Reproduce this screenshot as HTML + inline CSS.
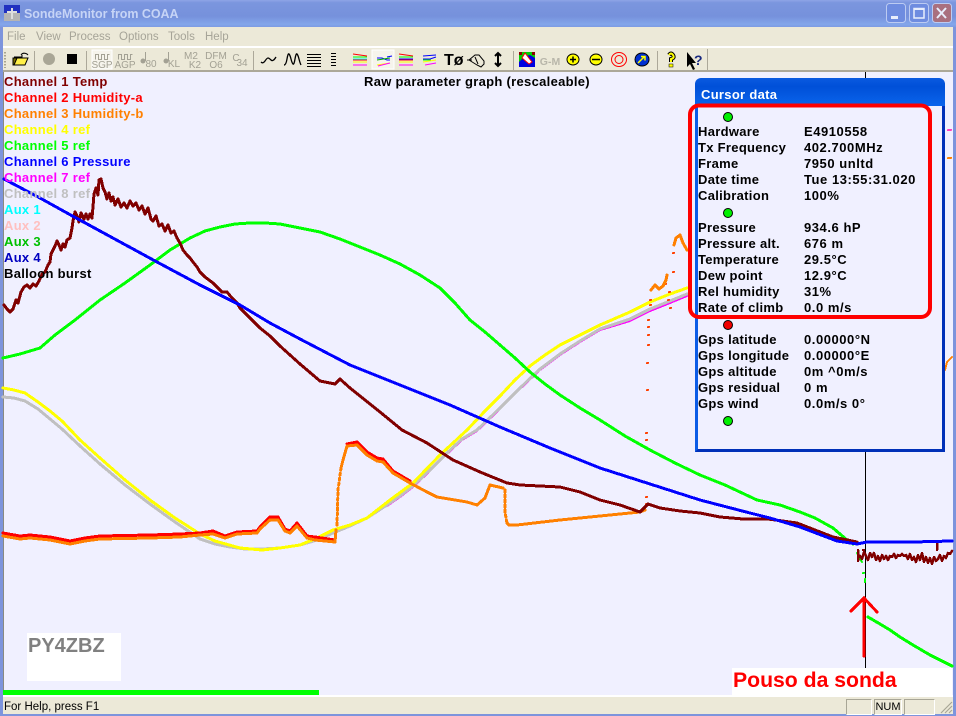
<!DOCTYPE html>
<html><head><meta charset="utf-8"><style>
html,body{margin:0;padding:0;width:956px;height:716px;overflow:hidden;background:#F0F0FF;font-family:"Liberation Sans",sans-serif}
div{position:absolute;white-space:nowrap}
.l{font-weight:bold;font-size:13px;letter-spacing:.3px;line-height:16px;height:16px;margin-top:1px}
.c{color:#000;left:698px}.v{color:#000;left:804px;letter-spacing:.55px}
.m{top:30px;font-size:11.5px;color:#A6A498;line-height:14px}
</style></head><body>
<div style="left:0;top:0;width:956px;height:27px;background:linear-gradient(#8EA5E6 0,#7B96DE 10%,#7691DC 60%,#83A6EA 90%,#7D9BE2 100%)"></div>
<div style="left:24px;top:5px;font-size:12.5px;font-weight:bold;letter-spacing:-.05px;color:#C6D4F6;line-height:18px">SondeMonitor from COAA</div>
<div style="left:0;top:27px;width:956px;height:19px;background:#ECE9D8"></div>
<div style="left:0;top:46px;width:956px;height:2px;background:#fff"></div>
<div style="left:0;top:48px;width:956px;height:22px;background:#ECE9D8"></div>
<div style="left:0;top:70px;width:956px;height:2px;background:#ACA899"></div>
<div class="m" style="left:7px">File</div><div class="m" style="left:36px">View</div><div class="m" style="left:69px">Process</div><div class="m" style="left:119px">Options</div><div class="m" style="left:168px">Tools</div><div class="m" style="left:205px">Help</div>

<svg style="position:absolute;left:0;top:0" width="956" height="716" viewBox="0 0 956 716" font-family="Liberation Sans">
<rect x="0" y="27" width="3" height="689" fill="#7D94DC"/><rect x="953" y="27" width="3" height="689" fill="#7D94DC"/><rect x="0" y="714" width="956" height="2" fill="#7D94DC"/>
<rect x="3" y="72" width="1" height="625" fill="#8a8a80"/>
<g stroke="#BCCBF2" stroke-width="1">
<rect x="886.500" y="3.500" width="19" height="19" rx="3" fill="#6E8CE0"/><rect x="909.500" y="3.500" width="19" height="19" rx="3" fill="#6E8CE0"/><rect x="932.500" y="3.500" width="19" height="19" rx="3" fill="#A9707F"/></g>
<rect x="891" y="16" width="7" height="3" fill="#E8EEFC"/><rect x="914" y="8.500" width="10" height="9.500" fill="none" stroke="#E8EEFC" stroke-width="1.500"/><rect x="914" y="8" width="10" height="2" fill="#E8EEFC"/>
<path d="M937 8l9 10M946 8l-9 10" stroke="#E8EEFC" stroke-width="2"/>
<rect x="4" y="5" width="16" height="16" fill="#B4B4B4"/><rect x="4" y="5" width="16" height="8" fill="#2030C0"/><path d="M7 12h10M12 8v11" stroke="#ddd" stroke-width="2"/>
<path d="M5 52v16" stroke="#a8a590" stroke-width="2" stroke-dasharray="1.500 1.500"/>
<g stroke="#ACA899"><path d="M34.500 51v19M86.500 51v19M253.500 51v19M513.500 51v19M657.500 51v19M707.500 49v21"/></g>
<path d="M14 57h8v-2" fill="none" stroke="#000"/>
<path d="M13 58h14l-3 1-2 6H13z" fill="#7a7000" stroke="#000"/><path d="M14 65l3-7h11l-3 7z" fill="#FFF048" stroke="#000"/><path d="M21 55q2-3 6-1l1 1" fill="none" stroke="#000"/>
<circle cx="49" cy="59" r="6" fill="#A9A696"/>
<rect x="67" y="54" width="10" height="10" fill="#000"/>
<rect x="92" y="50" width="20" height="19" fill="#F6F4EC" stroke="#fff"/>
<g fill="none" stroke="#A3A194" stroke-width="1">
<path d="M95.500 59.500v-5h3v5h3v-5h3v5h3v-5h2M118.500 59.500v-5h3v5h3v-5h3v5h3v-5h2"/>
<path d="M261 62q2 2 4-1t3-3 3 2 5-3" stroke="#000" stroke-width="1.300"/>
<path d="M284 65q2 0 3-6t2-5 2 5 2 5 2-5 2-5 2 5 2 6" stroke="#000" stroke-width="1.300"/>
<path d="M307 54.500h14M307 57.500h14M307 60.500h14M307 63.500h14M307 66.500h14" stroke="#000"/>
<path d="M331 53.500h5M331 56.500h5M331 59.500h5M331 62.500h5M331 65.500h5" stroke="#000"/>
</g>
<g font-size="10" fill="#A3A194" text-anchor="middle">
<text x="102" y="68">SGP</text><text x="125" y="68">AGP</text><text x="151" y="67">80</text><text x="174" y="67">KL</text><text x="191" y="59">M2</text><text x="195" y="68">K2</text><text x="216" y="59">DFM</text><text x="216" y="68">O6</text><text x="242" y="66">34</text><text x="236" y="61">C</text>
</g>
<g fill="#A3A194"><circle cx="143" cy="61" r="2.500"/><rect x="145" y="52" width="1" height="9"/><circle cx="166" cy="61" r="2.500"/><rect x="168" y="52" width="1" height="9"/></g>
<rect x="372" y="50" width="22" height="19" fill="#F6F4EC" stroke="#fff"/>
<g fill="none" stroke-width="1">
<path d="M353 54l14 2M353 60h14" stroke="#F00"/><path d="M353 57h14" stroke="#0f0"/><path d="M353 59h14" stroke="#0ff"/><path d="M353 62h14" stroke="#ff0"/><path d="M353 65h14" stroke="#f0f"/>
<path d="M377 58h5l5 2h3M387 57l5-1" stroke="#00f"/><path d="M377 60l13-2" stroke="#0a0"/><path d="M377 65l13-2" stroke="#ff0"/><path d="M378 66l12-3" stroke="#f0f"/>
<path d="M399 54l14 2M399 60h14" stroke="#F00"/><path d="M399 57h14" stroke="#0f0"/><path d="M399 59h14" stroke="#00f"/><path d="M399 62h14" stroke="#ff0"/><path d="M399 65h14" stroke="#f0f"/>
<path d="M423 56l13-1M423 59h7l6-2" stroke="#00f"/><path d="M423 60h8" stroke="#0f0"/><path d="M423 62l13-2" stroke="#ff0"/><path d="M425 65l11-2" stroke="#f0f"/>
<path d="M469 60l6-5 4 0 5 6 0 3-3 3-4-2-8-5zM472 60h-5M475 57l3 7" stroke="#000"/>
</g>
<text x="444" y="65" font-size="16" font-weight="bold" fill="#000">Tø</text>
<path d="M498 53v13M495 56l3-3 3 3M495 63l3 3 3-3" fill="none" stroke="#000" stroke-width="2"/>
<rect x="519" y="52" width="16" height="15" fill="#0000E0"/><path d="M519 52h16v6l-5-3-5 1-6 6z" fill="#00D000"/><path d="M525 53l7 9-3 2-7-6z" fill="#fff" stroke="#f00"/><rect x="519" y="52" width="3" height="3" fill="#800"/><rect x="532" y="52" width="3" height="3" fill="#800"/>
<text x="550" y="65" font-size="10.500" font-weight="bold" fill="#B8B6AA" text-anchor="middle">G-M</text>
<ellipse cx="573" cy="59.500" rx="6" ry="5.500" fill="#FF0" stroke="#000"/><path d="M570 59.500h6M573 56.500v6" stroke="#000" stroke-width="1.500"/>
<ellipse cx="596" cy="59.500" rx="6" ry="5.500" fill="#FF0" stroke="#000"/><path d="M592 59.500h8" stroke="#000" stroke-width="1.500"/>
<ellipse cx="619" cy="59.500" rx="7.500" ry="7" fill="none" stroke="#F00"/><ellipse cx="619" cy="59.500" rx="4" ry="4" fill="none" stroke="#F00"/>
<ellipse cx="642" cy="59.500" rx="7" ry="6.500" fill="#0030D0" stroke="#000"/><path d="M638 63l6-6M641 56.500h4v4" fill="none" stroke="#FF0" stroke-width="1.500"/>
<path d="M669 55q2-3 4 0t-2 4v3" fill="none" stroke="#000" stroke-width="4"/><path d="M669 55q2-3 4 0t-2 4v3" fill="none" stroke="#FF0" stroke-width="2"/><rect x="669" y="64" width="4" height="3" fill="#FF0" stroke="#000" stroke-width=".5"/>
<path d="M687 52v15l3-3 3 6 2-1-3-6h4z" fill="#000"/><text x="694" y="65" font-size="14" font-weight="bold" fill="#1A2A80">?</text>

<rect x="4" y="72" width="949" height="625" fill="#F0F0FF"/>
<rect x="27" y="633" width="94" height="48" fill="#fff"/>
<rect x="732" y="668" width="220" height="28" fill="#fff"/>
<path d="M865.500 72V668" stroke="#000" stroke-width="1"/>
<g fill="none" stroke-linejoin="round" stroke-linecap="round" shape-rendering="crispEdges">
<path stroke="#FF00FF" stroke-width="2" d="M387 506L400 497 413 487 430 471 447 454 462 440 477 431 500 409 520 389 540 370 560 355 580 342 600 330 630 321 650 311 670 303 687 296"/>
<path stroke="#C0C0C0" stroke-width="3" d="M3 397L14 398 25 401 38 409 50 419 62 429 80 446 100 464 125 485 150 504 175 522 200 539 215 544 230 547 245 549 262 549 280 548 300 545 317 540 333 533 350 526 367 518 387 505 400 496 413 486 430 470 447 453 462 439 477 430 500 408 520 388 540 369 560 354 580 341 600 329 630 319 650 309 670 301 687 294"/>
<path stroke="#FFFF00" stroke-width="3" d="M3 388L14 390 25 393 38 402 50 411 62 421 80 440 100 458 125 480 150 500 175 518 200 534 215 541 240 548 262 550 280 548 300 545 317 538 333 530 350 525 367 518 390 500 413 483 440 455 467 430 485 411 500 396 515 380 530 366 545 355 560 345 580 335 600 325 630 312 650 302 670 294 687 288"/>
<path stroke="#FF0000" stroke-width="3" d="M3 533L20 536 30 535 50 537 70 541 85 538 100 536 150 535 180 534 200 533 213 531 225 536 237 532 257 531 260 527 270 517 278 517 285 529 290 531 297 523 307 536 315 537 335 540M347 444L357 442 367 452 377 458 383 459 393 471 410 481"/>
<path stroke="#FF8000" stroke-width="3" d="M3 536L20 539 30 538 50 540 70 544 85 541 100 539 150 538 180 537 200 535 213 534 225 538 237 534 257 533 260 529 270 520 278 520 285 531 290 533 297 526 307 538 315 540 335 542 336 530M341 468L343 460 347 446 357 445 367 455 377 461 383 462 393 473 410 483 427 492 437 497 467 502 477 505 485 498 490 485 503 488M507 523L509 525 517 525 560 520 600 516 640 512 645 510"/>
<path stroke="#FF8000" stroke-width="3" stroke-dasharray="2 3" d="M337 525L338 490 341 468M505 490L505 512 507 523"/>
<path stroke="#FF4000" stroke-width="2" d="M646 504h1M646 497h1M646 440h1M646 433h1M647 390h1M647 363h1M648 345h1M648 335h1M648 327h1M648 320h1M650 305h1M650 300h1M668 300h1M670 308h1M669 292h1M673 272h1M673 253h1M665 284h1"/>
<path stroke="#FF8000" stroke-width="3" d="M651 290L655 285 659 289 663 286 666 280 667 275M674 245L676 238 680 235 683 243 687 250"/>
<path stroke="#FF8000" stroke-width="2" d="M945 370L947 362 952 357"/>
<path stroke="#FF40C0" stroke-width="2" d="M948 130h3"/><path stroke="#FF8000" stroke-width="2" d="M948 158h3"/>
<path stroke="#00FF00" stroke-width="3" d="M3 358L20 354 40 348 55 335 75 320 100 300 125 283 150 265 170 250 190 238 205 231 220 227 235 224 250 223 265 223 280 224 300 228 320 232 340 239 360 247 380 255 400 264 420 275 440 288 455 303 470 320 485 332 500 345 515 358 530 372 545 384 560 395 580 408 600 420 625 436 650 450 675 463 700 475 725 485 757 500 780 505 800 512 815 518 833 528 847 540 853 544"/>
<path stroke="#00FF00" stroke-width="2" d="M857 553L862 562M863 573h1M865 579V582"/>
<path stroke="#00FF00" stroke-width="3" d="M868 617L880 624 890 630 900 637 913 645 930 655 952 666"/>
<path stroke="#800000" stroke-width="3" d="M4 305L7 309 10 312 13 309 16 300 18 303 21 292 24 287 27 285 30 288 33 284 36 286 39 281 42 274 45 272 48 265 50 262 51 254 53 250 55 246 57 241 59 245 61 250 63 244 65 247 67 240 70 238 72 228 73 221 75 212 77 216 79 222 81 213 84 219 86 214 88 219 90 214 92 218 93 207 94 194 96 188 98 195 99 180 101 179 103 188 105 192 107 199 109 193 111 201 113 197 115 205 118 199 121 207 124 203 127 208 130 201 133 206 136 203 139 210 142 206 145 214 148 208 151 219 153 221 156 216 159 226 162 224 165 231 168 225 171 233 174 231 177 238 180 243 183 250 187 255 190 258 193 262 197 267 200 272 205 277 209 280 213 283 218 288 222 292 227 292 232 298 237 303 240 308 245 313 250 318 260 328 270 336 280 346 300 364 320 381 335 384 340 379 350 388 360 396 380 412 402 430 427 443 453 460 480 472 507 483 520 485 560 487 580 492 600 500 620 505 640 512 648 504 660 508 680 511 700 513 720 517 743 519 768 519 797 523 815 530 833 537 857 542"/>
<path stroke="#800000" stroke-width="2.500" d="M858 550V561M860 556L862 559 864 552 866 556 868 560 870 553 872 557 874 553 876 560 878 556 880 561 882 555 884 559 886 556 888 560 890 556 892 557 894 554 896 558 898 555 900 556 902 554 904 556 906 555 908 559 910 554 912 560 914 557 916 562 918 555 920 560 922 553 924 562 926 557 928 563 930 558 932 564 934 557 936 561 938 559 940 555 942 561 944 556 946 558 948 553 950 554 952 551M937 543V550M863 550h1"/>
<path stroke="#0000FF" stroke-width="3" d="M4 179L40 198 67 213 100 231 157 262 200 285 240 305 270 323 300 339 350 365 400 385 450 405 500 427 550 448 600 468 650 484 700 500 750 513 770 518 800 527 837 541 857 544 867 542 913 542 952 541"/>
<path stroke="#FF0000" stroke-width="3" stroke-linejoin="miter" d="M851 611L864 598 877 612"/>
<path stroke="#FF0000" stroke-width="3" d="M864 600V656"/>
</g>
<rect x="3" y="690" width="316" height="5" fill="#00FF00"/>
</svg>

<div class="l" style="left:4px;top:73px;color:#800000">Channel 1 Temp</div>
<div class="l" style="left:4px;top:89px;color:#FF0000">Channel 2 Humidity-a</div>
<div class="l" style="left:4px;top:105px;color:#FF8000">Channel 3 Humidity-b</div>
<div class="l" style="left:4px;top:121px;color:#FFFF00">Channel 4 ref</div>
<div class="l" style="left:4px;top:137px;color:#00FF00">Channel 5 ref</div>
<div class="l" style="left:4px;top:153px;color:#0000FF">Channel 6 Pressure</div>
<div class="l" style="left:4px;top:169px;color:#FF00FF">Channel 7 ref</div>
<div class="l" style="left:4px;top:185px;color:#C0C0C0">Channel 8 ref</div>
<div class="l" style="left:4px;top:201px;color:#00FFFF">Aux 1</div>
<div class="l" style="left:4px;top:217px;color:#FFC0C0">Aux 2</div>
<div class="l" style="left:4px;top:233px;color:#00C000">Aux 3</div>
<div class="l" style="left:4px;top:249px;color:#0000C0">Aux 4</div>
<div class="l" style="left:4px;top:265px;color:#000">Balloon burst</div>
<div class="l" style="left:364px;top:73px;color:#000">Raw parameter graph (rescaleable)</div>

<div style="left:28px;top:634px;font-size:20px;font-weight:bold;color:#808080;line-height:24px">PY4ZBZ</div>
<div style="left:733px;top:668px;font-size:21.200px;font-weight:bold;color:#FF0000;line-height:25px">Pouso da sonda</div>

<div style="left:695px;top:78px;width:250px;height:28px;border-radius:6px 6px 0 0;background:linear-gradient(#0A5AE0 0,#0050D8 30%,#0A64EC 100%)"></div>
<div style="left:701px;top:87px;font-size:13px;font-weight:bold;letter-spacing:.3px;color:#fff;line-height:16px">Cursor data</div>
<div style="left:695px;top:106px;width:244px;height:343px;background:#F0F0FF;border-left:3px solid #0C5CE6;border-right:3px solid #0030B8;border-bottom:3px solid #0030B8"></div>
<svg style="position:absolute;left:680px;top:95px" width="276" height="340" viewBox="680 95 276 340">
<g stroke="#000" stroke-width="1"><circle cx="728" cy="117" r="4.500" fill="#00F000"/><circle cx="728" cy="213" r="4.500" fill="#00F000"/><circle cx="728" cy="325" r="4.500" fill="#F00000"/><circle cx="728" cy="421" r="4.500" fill="#00F000"/></g>
<rect x="690" y="105.500" width="240" height="211.500" rx="9" fill="none" stroke="#FF0000" stroke-width="4"/>
</svg>
<div class="l c" style="top:123px">Hardware</div><div class="l v" style="top:123px">E4910558</div>
<div class="l c" style="top:139px">Tx Frequency</div><div class="l v" style="top:139px">402.700MHz</div>
<div class="l c" style="top:155px">Frame</div><div class="l v" style="top:155px">7950 unltd</div>
<div class="l c" style="top:171px">Date time</div><div class="l v" style="top:171px">Tue 13:55:31.020</div>
<div class="l c" style="top:187px">Calibration</div><div class="l v" style="top:187px">100%</div>
<div class="l c" style="top:219px">Pressure</div><div class="l v" style="top:219px">934.6 hP</div>
<div class="l c" style="top:235px">Pressure alt.</div><div class="l v" style="top:235px">676 m</div>
<div class="l c" style="top:251px">Temperature</div><div class="l v" style="top:251px">29.5°C</div>
<div class="l c" style="top:267px">Dew point</div><div class="l v" style="top:267px">12.9°C</div>
<div class="l c" style="top:283px">Rel humidity</div><div class="l v" style="top:283px">31%</div>
<div class="l c" style="top:299px">Rate of climb</div><div class="l v" style="top:299px">0.0 m/s</div>
<div class="l c" style="top:331px">Gps latitude</div><div class="l v" style="top:331px">0.00000°N</div>
<div class="l c" style="top:347px">Gps longitude</div><div class="l v" style="top:347px">0.00000°E</div>
<div class="l c" style="top:363px">Gps altitude</div><div class="l v" style="top:363px">0m ^0m/s</div>
<div class="l c" style="top:379px">Gps residual</div><div class="l v" style="top:379px">0 m</div>
<div class="l c" style="top:395px">Gps wind</div><div class="l v" style="top:395px">0.0m/s 0°</div>

<div style="left:3px;top:695px;width:950px;height:2px;background:#fff"></div>
<div style="left:3px;top:697px;width:950px;height:17px;background:#ECE9D8"></div>
<div style="left:4px;top:700px;font-size:11.500px;color:#000;line-height:14px">For Help, press F1</div>
<div style="left:846px;top:699px;width:24px;height:14px;border:1px solid;border-color:#A8A696 #fff #fff #A8A696"></div>
<div style="left:874px;top:699px;width:26px;height:14px;border:1px solid;border-color:#A8A696 #fff #fff #A8A696;font-size:11px;line-height:15px;text-align:center">NUM</div>
<div style="left:904px;top:699px;width:29px;height:14px;border:1px solid;border-color:#A8A696 #fff #fff #A8A696"></div>
<svg style="position:absolute;left:940px;top:701px" width="13" height="13"><path d="M12 1L1 12M12 5L5 12M12 9L9 12" stroke="#A8A696" stroke-width="1.200"/></svg>
</body></html>
